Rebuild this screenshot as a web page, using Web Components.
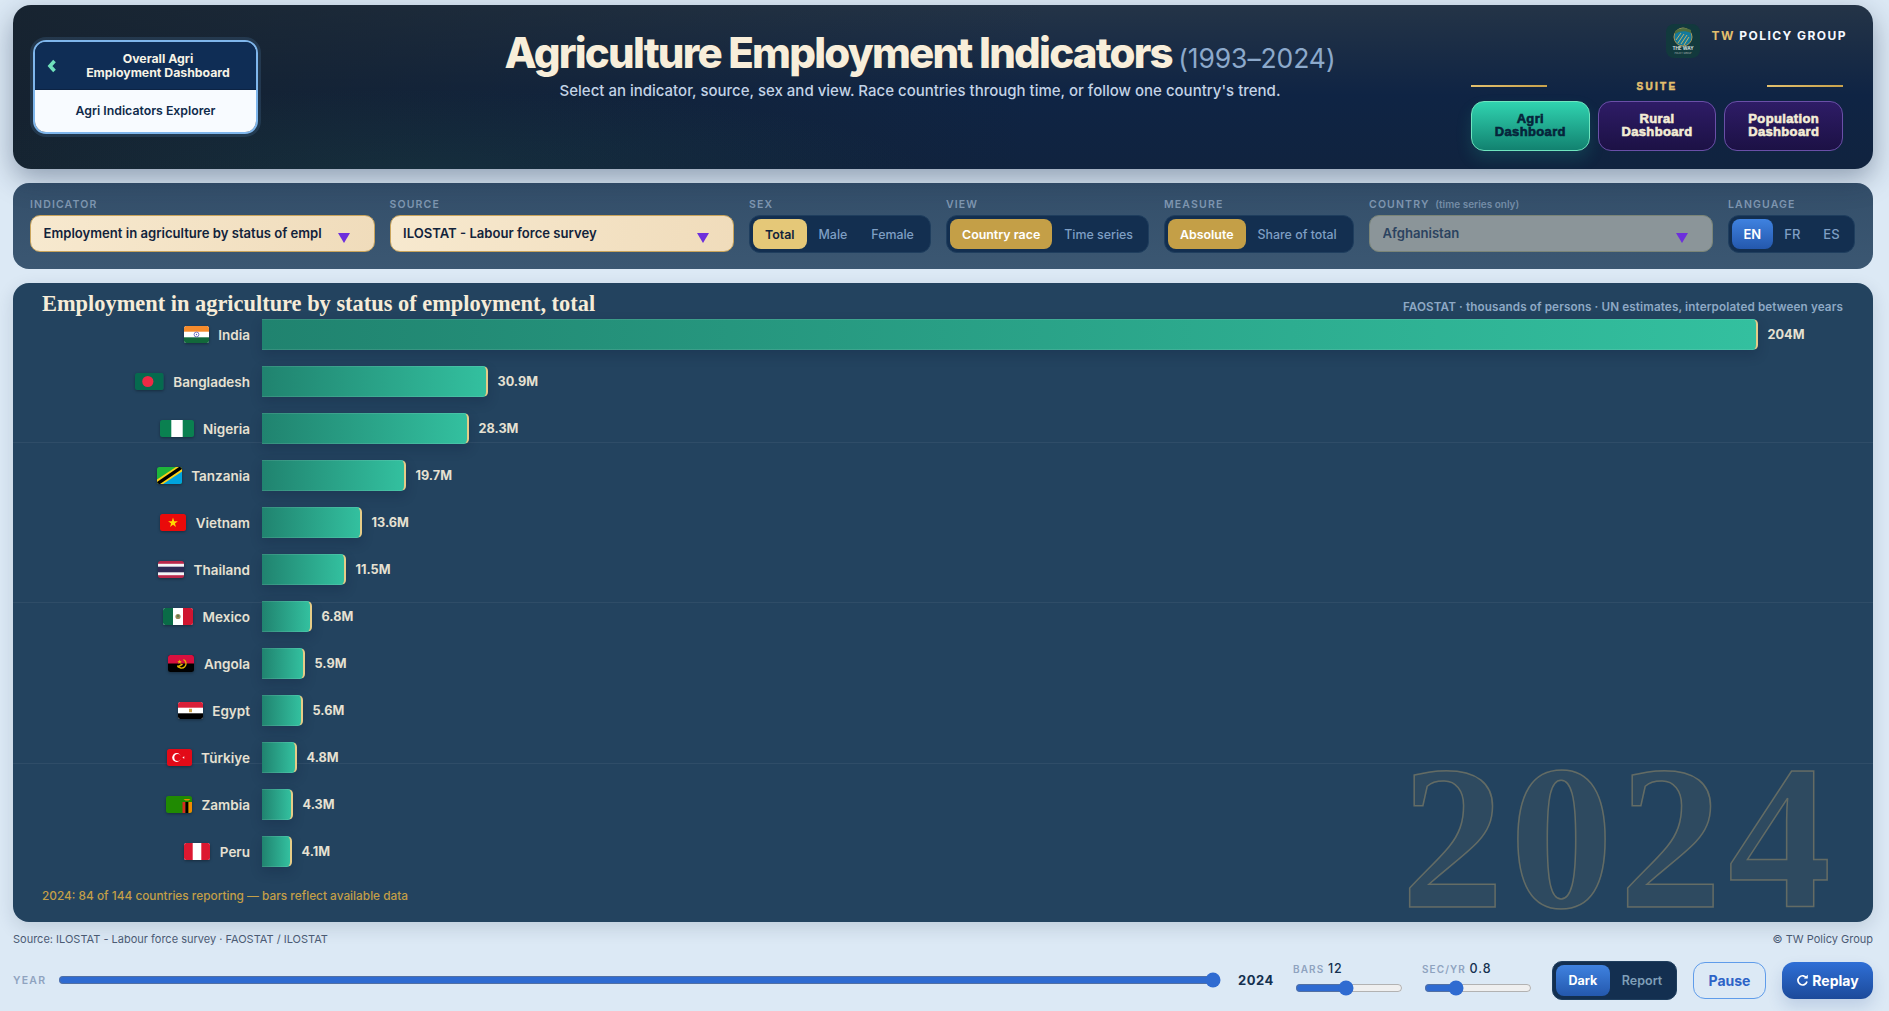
<!DOCTYPE html>
<html lang="en"><head><meta charset="utf-8"><title>Agriculture Employment Indicators</title>
<style>
html,body{margin:0;height:100%;overflow:hidden;background:#dce9f5;font-family:Inter,"Liberation Sans",sans-serif}
body{display:flex;flex-direction:column;padding:5px 16px 0 13px;box-sizing:border-box;height:1011px}
</style></head><body>
<tw-header></tw-header>
<tw-filters></tw-filters>
<tw-chart></tw-chart>
<tw-footer></tw-footer>
<tw-controls></tw-controls>
<script>
const el=(name,css,html,init)=>customElements.define(name,class extends HTMLElement{
  constructor(){super();this.attachShadow({mode:'open'})}
  connectedCallback(){const a=n=>this.getAttribute(n)||'';
    this.shadowRoot.innerHTML='<style>'+css+'</style>'+(typeof html==='function'?html(a):html);}
});
const FLAGS={
in:[25,'<rect width="25" height="17" fill="#fff"/><rect width="25" height="5.7" fill="#f58b2c"/><rect y="11.3" width="25" height="5.7" fill="#12683a"/><circle cx="12.5" cy="8.5" r="2.4" fill="none" stroke="#5a5ab8" stroke-width=".8"/><circle cx="12.5" cy="8.5" r=".7" fill="#5a5ab8"/>'],
bd:[28.5,'<rect width="28.5" height="17" fill="#066a4e"/><circle cx="12.8" cy="8.5" r="5.6" fill="#ee2a45"/>'],
ng:[34,'<rect width="34" height="17" fill="#0a8050"/><rect x="11.3" width="11.4" height="17" fill="#fff"/>'],
tz:[25,'<rect width="25" height="17" fill="#1eb53a"/><path d="M25 0V17H0z" fill="#00a3dd"/><path d="M0 17V12.5L19 0H25V4.5L6 17z" fill="#fcd116"/><path d="M0 17V15L22 0H25V2L3 17z" fill="#000"/>'],
vn:[26,'<rect width="26" height="17" fill="#ea0a0a"/><path d="M13 3.6l1.2 3.6h3.7l-3 2.2 1.1 3.6-3-2.2-3 2.2 1.1-3.6-3-2.2h3.7z" fill="#ffd800"/>'],
th:[26,'<rect width="26" height="17" fill="#b9274a"/><rect y="2.8" width="26" height="11.4" fill="#f4f4f6"/><rect y="5.7" width="26" height="5.6" fill="#2d2a55"/>'],
mx:[30,'<rect width="30" height="17" fill="#fff"/><rect width="10" height="17" fill="#0a6b47"/><rect x="20" width="10" height="17" fill="#cf1530"/><circle cx="15" cy="8.5" r="2.6" fill="#9a8a5a"/><circle cx="15" cy="8" r="1.2" fill="#5f7a4b"/>'],
ao:[26,'<rect width="26" height="17" fill="#000"/><rect width="26" height="8.5" fill="#d8103f"/><path d="M15.5 4.5a4.5 4.5 0 1 1-6 6" fill="none" stroke="#e5b700" stroke-width="1.3"/><path d="M9 11.5l5-3 1 1.2-5 3z" fill="#e5b700"/><path d="M11.5 4.5l.6 1.6 1.6.1-1.2 1 .4 1.6-1.4-.9-1.3.9.4-1.6-1.2-1 1.6-.1z" fill="#e5b700"/>'],
eg:[25,'<rect width="25" height="17" fill="#fff"/><rect width="25" height="5.7" fill="#d91f37"/><rect y="11.3" width="25" height="5.7" fill="#000"/><rect x="11" y="6.8" width="3" height="3.4" fill="#c9a24c"/>'],
tr:[25,'<rect width="25" height="17" fill="#e30a17"/><circle cx="9.6" cy="8.5" r="4.4" fill="#fff"/><circle cx="10.8" cy="8.5" r="3.5" fill="#e30a17"/><path d="M15.2 8.5l2.6-.9-1.6 2.2v-2.6l1.6 2.2z" fill="#fff"/>'],
zm:[26,'<rect width="26" height="17" fill="#208a02"/><rect x="16.5" y="6" width="3" height="11" fill="#d62b1f"/><rect x="19.5" y="6" width="3" height="11" fill="#000"/><rect x="22.5" y="6" width="3.5" height="11" fill="#f08a00"/><path d="M17.5 3h7l-2 1.6h-3z" fill="#f08a00"/>'],
pe:[26,'<rect width="26" height="17" fill="#fff"/><rect width="8.7" height="17" fill="#dc1830"/><rect x="17.3" width="8.7" height="17" fill="#dc1830"/>']
};
el('tw-flag',':host{display:inline-flex;flex:none;border-radius:2.5px;overflow:hidden;box-shadow:0 1px 3px rgba(0,0,0,.35)}svg{display:block}',
 a=>{const f=FLAGS[a('code')];return `<svg width="${f[0]}" height="17" viewBox="0 0 ${f[0]} 17">${f[1]}</svg>`});

el('tw-backcard',`:host{display:flex;flex-direction:column;width:225px;height:94px;box-sizing:border-box;border:2px solid #7fb6ec;border-radius:13px;overflow:hidden;box-shadow:0 0 0 3px rgba(60,95,130,.35);font-family:Inter,sans-serif}
.t{height:47px;background:#0f2d55;color:#f7f3e6;display:flex;align-items:center;border-bottom:1px solid #0c2344;font:700 12.3px/14px Inter,sans-serif;position:relative}
.c{width:33px;display:flex;justify-content:center;flex:none}.x{flex:1;text-align:center;padding-right:8px}
.b{flex:1;background:#f8fbff;color:#0f2a4a;font:600 12.3px Inter,sans-serif;display:flex;align-items:center;justify-content:center;padding-bottom:2px}`,
`<div class="t"><div class="c"><svg width="10" height="14" viewBox="0 0 10 14"><path d="M7.5 2L3 7l4.5 5" fill="none" stroke="#6fe0bb" stroke-width="3.6"/></svg></div><div class="x">Overall Agri<br>Employment Dashboard</div></div><div class="b">Agri Indicators Explorer</div>`);

el('tw-suitebtn',`:host{display:flex;flex:1;height:50px;box-sizing:border-box;border-radius:13px;align-items:center;justify-content:center;text-align:center;padding-bottom:3px;font:900 13px/13px "Liberation Sans",sans-serif;letter-spacing:.35px;-webkit-text-stroke:.6px currentColor;border:1.5px solid #6a4fa8;background:linear-gradient(#2e1c66,#1c1145);color:#f3ecd6}
:host([on]){border-color:#6fe6bf;background:linear-gradient(#30d3b0,#128270);color:#06243a;box-shadow:0 8px 16px rgba(30,190,160,.16)}`,`<slot></slot>`);

el('tw-brand',`:host{display:flex;gap:12px;align-items:flex-start;justify-content:flex-end;margin-right:-4px;height:34px}
.n{font:700 12px/23px Inter,sans-serif;letter-spacing:1.45px;color:#f5f8ff;white-space:nowrap}.n b{color:#e3c06e;font-weight:700}`,
`<svg width="34" height="34" viewBox="0 0 34 34"><rect width="34" height="34" rx="8" fill="#12393d"/><circle cx="17" cy="13" r="9" fill="#137a9c" stroke="#a99758" stroke-width="1"/><path d="M9 10c4-3 10-4 16-1v-3c-5-3-12-2-16 1z" fill="#4f6e3e"/><path d="M12 19l6-9M15 20l6-9M18 21l5-8M10 16l5-7" stroke="#d4b862" stroke-width=".9"/><text x="17" y="26" text-anchor="middle" font-family="Inter,sans-serif" font-weight="700" font-size="4.6" fill="#d8e0e0">THE WAY</text><text x="17" y="29.5" text-anchor="middle" font-family="Inter,sans-serif" font-size="2.3" fill="#a9b6b6">POLICY GROUP</text></svg><span class="n"><b>TW</b> POLICY GROUP</span>`);

el('tw-header',`:host{display:flex;flex:none;height:164px;box-sizing:border-box;padding:35px 30px 18px 20px;border-radius:18px;color:#fff;box-shadow:0 10px 28px rgba(20,40,70,.38);
background:radial-gradient(500px 80px at 22% 100%,rgba(30,90,85,.2),transparent),linear-gradient(100deg,rgba(22,34,46,.9) 0%,rgba(15,36,68,.0) 55%),linear-gradient(#243447 0%,#0f2444 55%,#10233f 100%);position:relative}
.l{width:336px;flex:none}.m{flex:1;text-align:center;margin-top:-12px}
h1{margin:0;font:800 42px/50px Inter,sans-serif;letter-spacing:-1.8px;color:#f8eeda;white-space:nowrap}
h1 small{font:400 26.5px Inter,sans-serif;letter-spacing:-.1px;color:#8ca9cb;margin-left:-1px}
p{margin:3px 0 0;font:500 15px/20px Inter,sans-serif;color:#c3d3e6}
.r{width:372px;flex:none;margin-top:-16px;display:flex;flex-direction:column}
.s{display:flex;align-items:center;justify-content:space-between;margin-top:23px;height:10px}
.s i{display:block;width:76px;height:2px;background:linear-gradient(90deg,#e3c06e,#c9a24c)}
.s span{font:900 10px "Liberation Sans",sans-serif;letter-spacing:2.3px;color:#e3c06e;-webkit-text-stroke:.5px #e3c06e}
.b{display:flex;gap:8px;margin-top:10px}`,
`<div class="l"><tw-backcard></tw-backcard></div>
<div class="m"><h1>Agriculture Employment Indicators <small>(1993–2024)</small></h1><p>Select an indicator, source, sex and view. Race countries through time, or follow one country's trend.</p></div>
<div class="r"><tw-brand></tw-brand><div class="s"><i></i><span>SUITE</span><i></i></div>
<div class="b"><tw-suitebtn on>Agri<br>Dashboard</tw-suitebtn><tw-suitebtn>Rural<br>Dashboard</tw-suitebtn><tw-suitebtn>Population<br>Dashboard</tw-suitebtn></div></div>`);

el('tw-field',`:host{display:flex;flex-direction:column;gap:4px;flex:none}
.l{font:600 10.5px/13px Inter,sans-serif;letter-spacing:1.15px;color:#7f97b1;white-space:nowrap}
.l small{font:600 10px Inter,sans-serif;letter-spacing:0;margin-left:2px;opacity:.85}`,
a=>`<div class="l">${a('label')}${a('note')?` <small>${a('note')}</small>`:''}</div><slot></slot>`);

el('tw-select',`:host{display:flex;align-items:center;height:37px;box-sizing:border-box;border:1px solid #c9a45c;border-radius:10px;padding:0 0 0 12.5px;background:linear-gradient(100deg,#f7e9cf,#f0dcbb);color:#12233b;font:600 13.1px Inter,sans-serif;position:relative}
:host([disabled]){background:#8b9599;border-color:#7b8578;color:#2b4360}
span{flex:1;white-space:nowrap;overflow:hidden;padding-bottom:1px}
svg{flex:none;margin:9px 24px 0 16px}`,
a=>`<span><slot></slot></span><svg width="12" height="10" viewBox="0 0 12 10"><path d="M0 0h12L6 10z" fill="#6d2fdc"/></svg>`);

el('tw-seg',`:host{display:inline-flex;height:38px;box-sizing:border-box;padding:3px;border-radius:11px;background:#132f50;border:1px solid #1f3e5e;font:500 var(--fs,12.4px) Inter,sans-serif;color:#7f9fc4;gap:0}
.o{display:flex;align-items:center;justify-content:center;padding:0 var(--p,12px);border-radius:8px;white-space:nowrap}
.on{background:var(--on,#c49f47);color:var(--fg,#fff);font-weight:600}`,
a=>a('opts').split('|').map((o,i)=>`<div class="o${i==+a('on')?' on':''}">${o}</div>`).join(''));

el('tw-filters',`:host{display:flex;flex:none;height:86px;margin-top:14px;box-sizing:border-box;padding:15px 18px 0 17px;border-radius:16px;background:linear-gradient(#344f6a,#3b5772);gap:15px}`,
`<tw-field label="INDICATOR"><tw-select style="width:344.5px">Employment in agriculture by status of empl</tw-select></tw-field>
<tw-field label="SOURCE"><tw-select style="width:344.5px">ILOSTAT - Labour force survey</tw-select></tw-field>
<tw-field label="SEX"><tw-seg opts="Total|Male|Female" on="0" style="--on:#e5c878;--fg:#12233b;width:182px"></tw-seg></tw-field>
<tw-field label="VIEW"><tw-seg opts="Country race|Time series" on="0" style="width:203px"></tw-seg></tw-field>
<tw-field label="MEASURE"><tw-seg opts="Absolute|Share of total" on="0" style="width:190px"></tw-seg></tw-field>
<tw-field label="COUNTRY" note="(time series only)"><tw-select disabled style="width:344px">Afghanistan</tw-select></tw-field>
<tw-field label="LANGUAGE"><tw-seg opts="EN|FR|ES" on="0" style="--on:linear-gradient(#3f82e0,#2458ad);--p:11.5px;--fs:13px;width:127px"></tw-seg></tw-field>`);

el('tw-row',`:host{display:flex;align-items:center;height:31px;flex:none}
.l{width:237px;flex:none;display:flex;justify-content:flex-end;align-items:center;gap:var(--g,9.5px);font:600 13.5px Inter,sans-serif;color:#e6e1d2;margin-right:11.5px;white-space:nowrap}
.b{height:31px;box-sizing:border-box;flex:none;background:linear-gradient(90deg,#20836f,#33c09f);border-right:2.5px solid #e6cc87;border-top:1px solid rgba(255,255,255,.1);border-bottom:1px solid rgba(255,255,255,.1);border-radius:0 5px 5px 0;box-shadow:0 5px 12px rgba(10,25,50,.22)}
.v{margin:1px 0 0 10px;font:700 12.7px/18px Inter,sans-serif;color:#e6e1d2}`,
a=>`<div class="l"><tw-flag code="${a('code')}"></tw-flag><span>${a('name')}</span></div><div class="b" style="width:${a('w')}px"></div><div class="v">${a('val')}</div>`);

el('tw-chart',`:host{display:block;flex:none;height:639px;margin-top:14px;box-sizing:border-box;padding:7px 30px 0 0;border-radius:16px;position:relative;box-shadow:0 6px 18px rgba(20,40,70,.14);
background:repeating-linear-gradient(to bottom,transparent 0 159.2px,rgba(255,255,255,.055) 159.2px 160.2px),#23435f}
.h{display:flex;justify-content:space-between;align-items:center;height:29px;padding-left:29px}
h2{margin:0;font:700 22.4px "Liberation Serif",serif;color:#f6ecd8;white-space:nowrap;margin-top:-1px}
.n{font:600 11.7px Inter,sans-serif;color:#8ea9c5;letter-spacing:.12px;margin-top:4px}
.rows{display:flex;flex-direction:column;gap:16px}
.note{font:500 11.85px Inter,sans-serif;color:#c49f47;padding-left:29px;margin-top:22px}
.w{position:absolute;right:36px;bottom:1px;font:700 206px/.8 "Liberation Serif",serif;letter-spacing:6px;color:rgba(205,175,110,.07);-webkit-text-stroke:1.5px rgba(205,175,110,.36);pointer-events:none}`,
`<div class="w">2024</div><div class="h"><h2>Employment in agriculture by status of employment, total</h2><div class="n">FAOSTAT · thousands of persons · UN estimates, interpolated between years</div></div>
<div class="rows">
<tw-row code="in" name="India" val="204M" w="1496"></tw-row>
<tw-row code="bd" name="Bangladesh" val="30.9M" w="226"></tw-row>
<tw-row code="ng" name="Nigeria" val="28.3M" w="207"></tw-row>
<tw-row code="tz" name="Tanzania" val="19.7M" w="144"></tw-row>
<tw-row code="vn" name="Vietnam" val="13.6M" w="100"></tw-row>
<tw-row code="th" name="Thailand" val="11.5M" w="84"></tw-row>
<tw-row code="mx" name="Mexico" val="6.8M" w="50"></tw-row>
<tw-row code="ao" name="Angola" val="5.9M" w="43"></tw-row>
<tw-row code="eg" name="Egypt" val="5.6M" w="41"></tw-row>
<tw-row code="tr" name="Türkiye" val="4.8M" w="35"></tw-row>
<tw-row code="zm" name="Zambia" val="4.3M" w="31"></tw-row>
<tw-row code="pe" name="Peru" val="4.1M" w="30"></tw-row>
</div><div class="note">2024: 84 of 144 countries reporting — bars reflect available data</div>`);

el('tw-footer',`:host{display:flex;justify-content:space-between;flex:none;margin-top:9px;height:16px;font:400 11px/16px Inter,sans-serif;color:#4c5c75}`,
`<span>Source: ILOSTAT - Labour force survey · FAOSTAT / ILOSTAT</span><span>© TW Policy Group</span>`);

el('tw-slider',`:host{display:block}input{display:block;margin:0 2px;width:var(--w,108px);height:16px;accent-color:#2f6bd1}`,
a=>`<input type="range" min="0" max="100" value="${a('v')}" aria-label="${a('name')}">`);

el('tw-stat',`:host{display:flex;flex-direction:column;gap:4px;flex:none;margin-top:-3px}
.t{font:600 10px/14px Inter,sans-serif;letter-spacing:1.1px;color:#8fa3bf;white-space:nowrap}.t b{font:500 12.5px Inter,sans-serif;letter-spacing:1px;color:#14304f}`,
a=>`<div class="t">${a('label')} <b>${a('val')}</b></div><tw-slider name="${a('label')}" v="${a('v')}"></tw-slider>`);

el('tw-controls',`:host{display:flex;flex:none;align-items:center;height:40px;margin-top:13px}
.y{font:600 10.5px Inter,sans-serif;letter-spacing:1.25px;color:#8fa3bf;width:43px;flex:none}
.yr{font:700 13px Inter,sans-serif;letter-spacing:.5px;color:#14304f;margin:0 20px 0 15px;width:35px;flex:none}
tw-stat+tw-stat{margin-left:17px}
.th{display:flex;height:39px;box-sizing:border-box;padding:3px;border-radius:10px;background:#132f50;border:1px solid #1f3e5e;margin:0 16px 0 18px;font:600 12.5px Inter,sans-serif;color:#7f9fb8;width:125px;flex:none}
.th div{display:flex;align-items:center;padding:0 12px}.th .on{background:linear-gradient(#3f82e0,#2458ad);color:#fff;border-radius:8px;font-weight:700;padding:0 12.5px}
button{height:37px;border-radius:12px;font:700 14px Inter,sans-serif;box-sizing:border-box;padding:0;flex:none}
.p{width:73px;background:transparent;border:1.5px solid #5f9cea;color:#2d63c7;margin-right:16px}
.re{width:91px;border:0;background:linear-gradient(#2f6fd6,#1c4a9a);color:#fff;box-shadow:0 8px 16px rgba(30,70,140,.16);display:flex;align-items:center;justify-content:center;gap:3px}`,
`<span class="y">YEAR</span><tw-slider name="Year" v="100" style="--w:1163px;flex:none"></tw-slider><span class="yr">2024</span>
<tw-stat label="BARS" val="12" v="47"></tw-stat><tw-stat label="SEC/YR" val="0.8" v="26"></tw-stat>
<div class="th"><div class="on">Dark</div><div>Report</div></div>
<button class="p">Pause</button><button class="re"><svg width="13" height="13" viewBox="0 0 13 13"><path d="M10.6 4.2A4.6 4.6 0 1 0 11 7.5" fill="none" stroke="#fff" stroke-width="1.7"/><path d="M7.8 4.6h4V.8z" fill="#fff"/></svg>Replay</button>`);
</script>
</body></html>
